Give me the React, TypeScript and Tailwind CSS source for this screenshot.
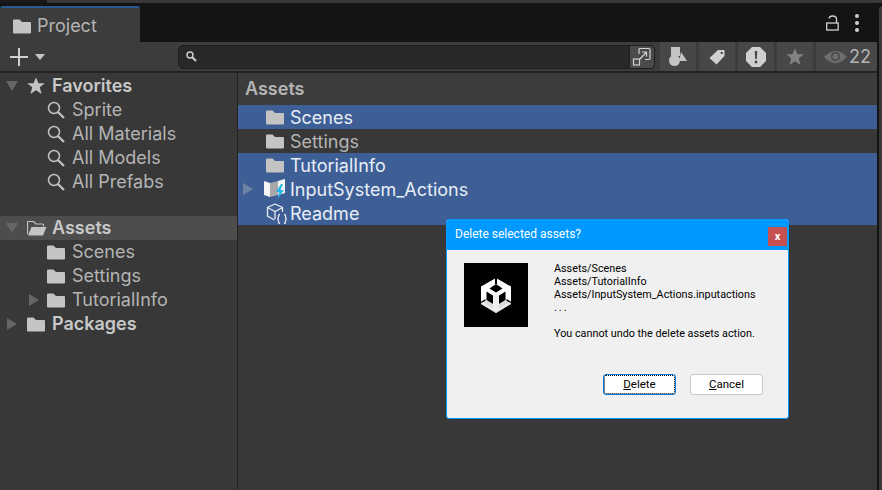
import { ReactNode } from 'react';

const font = { fontFamily: 'Inter, sans-serif' };

function Folder({ className = 'fill-[#c4c4c4]' }: { className?: string }) {
  return (
    <svg width="18" height="15" viewBox="0 0 18 15" className={`shrink-0 ${className}`}>
      <path d="M0 1.5Q0 .5 1 .5H6.5L9 3H17Q18 3 18 4V13.5Q18 14.5 17 14.5H1Q0 14.5 0 13.5Z" />
    </svg>
  );
}

function OpenFolder() {
  return (
    <svg width="20" height="15" viewBox="0 0 20 15" className="shrink-0">
      <path d="M.5 13V1.5Q.5 .5 1.5 .5H6.5L9 3H15.5Q16.5 3 16.5 4V5.5" fill="none" stroke="#c4c4c4" strokeWidth="1.2" />
      <path d="M1 14.5L4.5 6H19.5L16 14.5Z" fill="#c4c4c4" />
    </svg>
  );
}

function Lens() {
  return (
    <svg width="18" height="18" viewBox="0 0 18 18" className="shrink-0" fill="none" stroke="#c4c4c4">
      <circle cx="7" cy="7" r="5.5" strokeWidth="1.5" />
      <path d="M11 11L17 17" strokeWidth="2.2" />
    </svg>
  );
}

function Arrow({ open, dim }: { open?: boolean; dim?: boolean }) {
  return (
    <svg width="12" height="12" viewBox="0 0 12 12" className="shrink-0">
      <path d={open ? 'M0 1H12L6 11Z' : 'M1 0L11 6L1 12Z'} className={dim ? 'fill-[#6f83a5]' : 'fill-[#666666]'} />
    </svg>
  );
}

function Star({ size, className }: { size: number; className: string }) {
  return (
    <svg width={size} height={size} viewBox="0 0 20 20" className={`shrink-0 ${className}`}>
      <path d="M10 .5L12.8 7H19.8L14.2 11.4L16.2 18.8L10 14.6L3.8 18.8L5.8 11.4L.2 7H7.2Z" />
    </svg>
  );
}

function TreeRow({ pad, arrow, icon, label, bold, active }: { pad: string; arrow?: ReactNode; icon: ReactNode; label: string; bold?: boolean; active?: boolean }) {
  return (
    <div className={`flex h-6 items-center ${pad} ${active ? 'bg-[#4d4d4d]' : ''}`}>
      <div className={`flex shrink-0 items-center ${bold ? 'w-[21px]' : 'w-[19px]'}`}>{arrow}</div>
      <div className="flex w-[25px] shrink-0 items-center">{icon}</div>
      <span className={`text-[18px] leading-6 whitespace-nowrap ${bold ? 'font-semibold text-[#c8c8c8]' : 'text-[#b4b4b4]'}`}>{label}</span>
    </div>
  );
}

function AssetRow({ icon, label, selected, arrow }: { icon: ReactNode; label: string; selected?: boolean; arrow?: boolean }) {
  return (
    <div className={`flex h-6 items-center pl-[4px] ${selected ? 'bg-[#3e5f96] text-[#e8eef7]' : 'text-[#b4b4b4]'}`}>
      <div className="flex w-[24px] shrink-0 items-center">{arrow && <Arrow dim />}</div>
      <div className="flex w-[24px] shrink-0 items-center">{icon}</div>
      <span className="pt-px text-[18px] leading-6 whitespace-nowrap">{label}</span>
    </div>
  );
}

function FilterBtn({ children }: { children: ReactNode }) {
  return <div className="flex h-full w-[36px] items-center justify-center bg-[#474747]">{children}</div>;
}

function InputActionsIcon() {
  return (
    <svg width="22" height="20" viewBox="0 0 22 20" className="ml-[-2px] shrink-0">
      <path d="M0 2L6 4V18L0 16Z" fill="#f4f4f4" />
      <path d="M6 4L14 2V16L6 18Z" fill="#a8a8a8" />
      <path d="M14 2L21 0V14L14 16Z" fill="#f4f4f4" />
      <path d="M17 5L12 13H15L13.5 20L20 11H16.5L19 5Z" fill="#27b4e8" />
    </svg>
  );
}

function PrefabIcon() {
  return (
    <svg width="22" height="21" viewBox="0 0 22 21" fill="none" stroke="#e4e8ef" strokeWidth="1.3" className="shrink-0">
      <path d="M9 1L16.5 4.5V9M9 1L1.5 4.5V13L8.5 17M1.5 4.5L9 8.5L16.5 4.5M9 8.5V16" />
      <path d="M14 11.5Q12.3 11.5 12.5 13.5Q12.5 15.8 11.3 16Q12.5 16.2 12.5 18.5Q12.5 20.5 14 20.5M18 11.5Q19.7 11.5 19.5 13.5Q19.5 15.8 20.7 16Q19.5 16.2 19.5 18.5Q19.5 20.5 18 20.5" />
    </svg>
  );
}

function UnityLogo() {
  return (
    <svg width="30" height="35" viewBox="0 0 30 35">
      <path d="M15 0L30 8.5V26L15 35L0 26V8.5Z" fill="#fff" />
      <path d="M0 24.5L15 33.5L30 24.5V26L15 35L0 26Z" fill="#d8d8d8" />
      <path d="M5 22.5L12.5 27V31L1.5 24.5ZM25 22.5L17.5 27V31L28.5 24.5Z" fill="#dcdcdc" />
      <path d="M12.5 17H17.5V33H12.5Z" fill="#eeeeee" />
      <path d="M14 0H16V6H14Z" fill="#000" />
      <path d="M15 6L21.5 10.5L15 14.5L8.5 10.5Z" fill="#000" />
      <path d="M5.5 13.5L12 17.5V26L5.5 22Z" fill="#000" />
      <path d="M24.5 13.5L18 17.5V26L24.5 22Z" fill="#000" />
      <path d="M0 24.5L4.5 21.8M30 24.5L25.5 21.8" stroke="#000" strokeWidth="1.4" />
    </svg>
  );
}

function Dialog() {
  return (
    <div className="absolute top-[219px] left-[446px] flex h-[200px] w-[343px] flex-col overflow-hidden rounded-[3px] border border-[#0099ff] bg-[#f0f0f0]" style={{ fontFamily: 'Roboto, sans-serif' }}>
      <div className="flex h-[30px] shrink-0 items-start justify-between bg-[#0099ff] pl-2">
        <span className="mt-[5px] text-[12px] leading-[18px] text-white">Delete selected assets?</span>
        <div className="mt-[7px] mr-[1px] flex h-[19px] w-[19px] items-center justify-center bg-[#c75050] text-[11px] leading-none font-bold text-white">x</div>
      </div>
      <div className="flex flex-1 flex-col px-[17px] pt-[13px]">
        <div className="flex">
          <div className="flex h-[64px] w-[64px] shrink-0 items-center justify-center bg-black">
            <UnityLogo />
          </div>
          <div className="ml-[26px] text-[10.8px] leading-[13px] whitespace-nowrap text-black">
            <div className="mt-[-1px]">Assets/Scenes</div>
            <div>Assets/TutorialInfo</div>
            <div>Assets/InputSystem_Actions.inputactions</div>
            <div className="tracking-[2px]">...</div>
            <div className="mt-[13px]">You cannot undo the delete assets action.</div>
          </div>
        </div>
        <div className="mt-[34px] flex justify-end gap-[14px] pr-[8px] text-[11.5px] text-black">
          <button className="flex h-[21px] w-[73px] items-center justify-center rounded-[3px] border border-[#0078d7] bg-white outline-1 -outline-offset-2 outline-black outline-dotted">
            <span><u>D</u>elete</span>
          </button>
          <button className="flex h-[21px] w-[73px] items-center justify-center rounded-[3px] border border-[#c8c8c8] bg-white">
            <span><u>C</u>ancel</span>
          </button>
        </div>
      </div>
    </div>
  );
}

export default function App() {
  return (
    <div className="relative flex h-[490px] w-[882px] flex-col overflow-hidden bg-[#141414]" style={font}>
      <div className="flex h-[3px] shrink-0">
        <div className="w-[47px] bg-[#191919]" />
        <div className="flex-1 bg-[#383838]" />
      </div>
      <div className="flex min-h-0 flex-1">
        <div className="flex min-w-0 flex-1 flex-col">
          {/* tab strip */}
          <div className="flex h-[39px] shrink-0 items-end justify-between">
            <div className="flex h-[36px] w-[140px] items-center gap-[6px] rounded-t-[3px] border-t-2 border-[#2a5b8f] bg-[#3c3c3c] pt-[2px] pl-[13px]">
              <Folder />
              <span className="text-[18px] leading-6 text-[#b4b4b4]">Project</span>
            </div>
            <div className="flex h-full items-center gap-[16px] pr-[20px]">
              <svg width="13" height="16" viewBox="0 0 13 16" fill="none" stroke="#d0d0d0" strokeWidth="1.3">
                <path d="M3 3.5Q3.5 1 6.5 1Q10.5 1 10.5 4V8" />
                <rect x=".7" y="8" width="11.5" height="7" />
              </svg>
              <div className="flex flex-col gap-[3px]">
                <div className="h-[4px] w-[4px] rounded-full bg-[#d0d0d0]" />
                <div className="h-[4px] w-[4px] rounded-full bg-[#d0d0d0]" />
                <div className="h-[4px] w-[4px] rounded-full bg-[#d0d0d0]" />
              </div>
            </div>
          </div>

          <div className="flex min-h-0 flex-1 pr-[2px]">
            <div className="flex min-w-0 flex-1 flex-col bg-[#383838]">
              {/* toolbar */}
              <div className="flex h-[31px] shrink-0 items-center border-b-2 border-[#232323] bg-[#3c3c3c]">
                <div className="flex w-[178px] shrink-0 items-center pl-[10px]">
                  <svg width="18" height="18" viewBox="0 0 18 18" stroke="#d0d0d0" strokeWidth="2">
                    <path d="M9 0V18M0 9H18" />
                  </svg>
                  <svg width="10" height="6" viewBox="0 0 10 6" className="ml-[7px]">
                    <path d="M0 0H10L5 6Z" fill="#c4c4c4" />
                  </svg>
                </div>
                <div className="flex h-[24px] w-[477px] shrink-0 items-center rounded-[5px] border border-[#1e1e1e] bg-[#282828] pl-[7px]">
                  <svg width="11" height="11" viewBox="0 0 11 11" fill="none" stroke="#d0d0d0">
                    <circle cx="4" cy="4" r="3" strokeWidth="1.4" />
                    <path d="M6.5 6.5L10 10" strokeWidth="2" />
                  </svg>
                </div>
                <div className="ml-[-26px] flex h-[24px] w-[26px] shrink-0 items-center justify-center rounded-r-[5px] border border-[#1e1e1e] bg-[#4a4a4a]">
                  <svg width="20" height="20" viewBox="0 0 20 20" fill="none" stroke="#d0d0d0" strokeWidth="1.2">
                    <path d="M7 7V2.5Q7 1.5 8 1.5H17Q18 1.5 18 2.5V11.5Q18 12.5 17 12.5H13" />
                    <rect x="1.5" y="12" width="6" height="6" />
                    <path d="M8 12L14.5 5M10 5H14.5V9.5" />
                  </svg>
                </div>
                <div className="flex h-full flex-1 items-stretch justify-end gap-[3px]">
                  <FilterBtn>
                    <svg width="18" height="19" viewBox="0 0 18 19" fill="#c4c4c4">
                      <rect x="2" y="0" width="9" height="9" />
                      <circle cx="5.5" cy="13.5" r="5.5" />
                      <path d="M12 5L18 14H10Z" />
                    </svg>
                  </FilterBtn>
                  <FilterBtn>
                    <svg width="16" height="16" viewBox="0 0 16 16" fill="#d0d0d0">
                      <path d="M9 1H15.5V7L7.5 15.5L.5 9ZM12.7 2.7A1.2 1.2 0 1 0 12.71 2.7Z" fillRule="evenodd" />
                    </svg>
                  </FilterBtn>
                  <FilterBtn>
                    <svg width="20" height="20" viewBox="0 0 20 20">
                      <path d="M6 0H14L20 6V14L14 20H6L0 14V6Z" fill="#d0d0d0" />
                      <path d="M8.7 4H11.3L10.8 12H9.2Z" fill="#474747" />
                      <circle cx="10" cy="15" r="1.4" fill="#474747" />
                    </svg>
                  </FilterBtn>
                  <FilterBtn>
                    <Star size={18} className="fill-[#828282]" />
                  </FilterBtn>
                  <div className="flex h-full w-[61px] items-center gap-[2px] bg-[#474747] pl-[8px]">
                    <svg width="23" height="14" viewBox="0 0 23 14" className="shrink-0">
                      <path d="M0 7Q11.5 -5 23 7Q11.5 19 0 7Z" fill="#6e6e6e" />
                      <circle cx="11.5" cy="6.5" r="4.5" fill="#474747" />
                      <circle cx="11.5" cy="6.5" r="3" fill="#6e6e6e" />
                    </svg>
                    <span className="text-[18px] leading-6 text-[#b4b4b4]">22</span>
                  </div>
                </div>
              </div>

              <div className="flex min-h-0 flex-1">
                {/* sidebar */}
                <div className="w-[238px] shrink-0 border-r border-[#232323] pt-[1px]">
                  <TreeRow pad="pl-[6px]" arrow={<Arrow open />} icon={<Star size={18} className="fill-[#c4c4c4]" />} label="Favorites" bold />
                  <TreeRow pad="pl-[28px]" icon={<Lens />} label="Sprite" />
                  <TreeRow pad="pl-[28px]" icon={<Lens />} label="All Materials" />
                  <TreeRow pad="pl-[28px]" icon={<Lens />} label="All Models" />
                  <TreeRow pad="pl-[28px]" icon={<Lens />} label="All Prefabs" />
                  <div className="h-[22px]" />
                  <TreeRow pad="pl-[6px]" active arrow={<Arrow open />} icon={<OpenFolder />} label="Assets" bold />
                  <TreeRow pad="pl-[28px]" icon={<Folder />} label="Scenes" />
                  <TreeRow pad="pl-[28px]" icon={<Folder />} label="Settings" />
                  <TreeRow pad="pl-[28px]" arrow={<Arrow />} icon={<Folder />} label="TutorialInfo" />
                  <TreeRow pad="pl-[6px]" arrow={<Arrow />} icon={<Folder />} label="Packages" bold />
                </div>
                {/* asset list */}
                <div className="min-w-0 flex-1">
                  <div className="flex h-[32px] items-center bg-[#3c3c3c] pl-[7px]">
                    <span className="text-[18px] leading-6 font-semibold text-[#b4b4b4]">Assets</span>
                  </div>
                  <AssetRow selected icon={<Folder />} label="Scenes" />
                  <AssetRow icon={<Folder />} label="Settings" />
                  <AssetRow selected icon={<Folder />} label="TutorialInfo" />
                  <AssetRow selected arrow icon={<InputActionsIcon />} label="InputSystem_Actions" />
                  <AssetRow selected icon={<PrefabIcon />} label="Readme" />
                </div>
              </div>
            </div>
          </div>
        </div>
        <div className="mt-[3px] w-[3px] shrink-0 rounded-tl-[3px] bg-[#383838]" />
      </div>
      <Dialog />
    </div>
  );
}
